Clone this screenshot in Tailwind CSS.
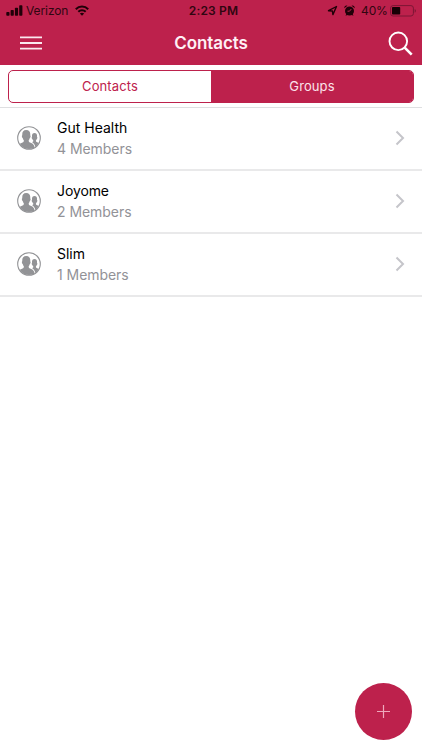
<!DOCTYPE html>
<html lang="en">
<head>
<meta charset="utf-8">
<title>Contacts</title>
<script src="https://cdn.jsdelivr.net/npm/@tailwindcss/browser@4"></script>
</head>
<body class="bg-white font-['Inter','Liberation_Sans',sans-serif]">
<svg class="absolute h-0 w-0">
  <clipPath id="disc"><circle cx="12" cy="12" r="11"/></clipPath>
  <symbol id="group" viewBox="0 0 24 24">
    <g clip-path="url(#disc)" fill="#929396">
      <path d="M15.2 16.2c1-.5 1.2-1 1.100-1.700-.5-.4-.8-.9-1-1.500-.7-.3-.8-1.700-.3-2-.2-2.400.6-3.900 2.500-3.900 2 0 2.800 1.500 2.500 3.900.6.300.4 1.700-.2 2-.2.700-.5 1.100-.9 1.500 0 1 .4 1.400 1.800 2l3 1V24h-5c-.2-4-.9-6.300-3.500-7.800z"/>
      <path d="M0 24v-4.500c1.500-1.500 4-2.100 5.500-2.900 1.300-.6 1.400-1.300 1.300-2.400-.6-.6-.9-1.400-1.100-2.300-.9-.4-1.100-2.400-.4-2.700C5 6 6.200 3.900 9.200 3.900c3.200 0 4.400 2.100 4 5.300.7.400.4 2.300-.4 2.700-.2.900-.5 1.700-1.100 2.300 0 1.200.2 1.800 1.400 2.400 2.800 1.200 4.600 2.100 4.900 7.400z"/>
    </g>
    <circle cx="12" cy="12" r="11.300" fill="none" stroke="#929396" stroke-width="1.100"/>
  </symbol>
  <symbol id="chevron" viewBox="0 0 10 16">
    <path d="M1.500 1.500 8 8l-6.500 6.500" fill="none" stroke="#c5c5ca" stroke-width="2"/>
  </symbol>
</svg>
<div class="relative flex h-[750px] w-[422px] flex-col overflow-hidden">
  <header class="h-[65px] shrink-0 bg-[#bd214c]">
    <div class="grid h-[21px] grid-cols-[1fr_auto_1fr] items-center pl-1.5 pr-[5px] text-[12px] leading-[21px] text-[#300611]">
      <div class="flex items-center">
        <svg class="h-[11px] w-[17px]" viewBox="0 0 17 11" fill="#200008"><rect x="0.300" y="7" width="3.200" height="3.700" rx=".8"/><rect x="4.600" y="5" width="3.200" height="5.700" rx=".8"/><rect x="8.900" y="2.800" width="3.200" height="7.900" rx=".8"/><rect x="13.200" y="0.300" width="3.200" height="10.400" rx=".8"/></svg>
        <span class="ml-[3px] w-[43px] whitespace-nowrap tracking-[-0.1px]">Verizon</span>
        <svg class="ml-[6px] h-[11px] w-[14px]" viewBox="0 0 14 11" fill="none" stroke="#200008" stroke-width="2"><path d="M.8 4.200C4.300.5 9.700.5 13.200 4.200M3.300 6.700c2.100-2.100 5.300-2.100 7.400 0"/><path d="M4.800 8.500c1.300-1.100 3.100-1.100 4.400 0L7 10.800z" fill="#200008" stroke="none"/></svg>
      </div>
      <span class="pl-[4px] font-semibold tracking-[0.15px]">2:23 PM</span>
      <div class="flex items-center justify-end">
        <svg class="h-[11px] w-[11px]" viewBox="0 0 11 11" fill="none" stroke="#200008" stroke-width="1.400" stroke-linejoin="round"><path d="M1.500 5.700 9.500 1.500 5.900 9.600 5.400 6z"/></svg>
        <svg class="ml-[6px] h-[11px] w-[11px]" viewBox="0 0 11 11"><g fill="#200008"><circle cx="5.500" cy="6" r="4.500"/><path d="M.3 3.200C0 1.500 1.700.1 3.400.7zM10.700 3.200C11 1.500 9.300.1 7.600.7zM1.500 10.800l1-2 1.500 1zM9.500 10.800l-1-2-1.500 1z"/></g><path d="M7.300 4 5.500 6.200H3.500" fill="none" stroke="#bd214c"/></svg>
        <span class="ml-[6px] w-[26px] whitespace-nowrap tracking-[-0.1px]">40%</span>
        <svg class="ml-[3px] h-[12px] w-[27px]" viewBox="0 0 27 12"><rect x=".6" y=".6" width="22.800" height="10.400" rx="2.500" fill="none" stroke="#7c1634"/><rect x="2" y="2" width="8.200" height="7.600" rx=".8" fill="#160005"/><path d="M24.700 4c1.600.5 1.600 3.200 0 3.700z" fill="#7c1634"/></svg>
      </div>
    </div>
    <div class="grid h-[44px] grid-cols-[1fr_auto_1fr] items-center pl-[9px] pr-[9px]">
      <svg class="ml-[11px] h-[14px] w-[22px]" viewBox="0 0 22 14" stroke="#fbe9ef" stroke-width="1.800"><path d="M0 1.400h22M0 7h22M0 12.600h22"/></svg>
      <h1 class="text-[17px] font-semibold leading-[44px] tracking-[-0.1px] text-[#fff0f5]">Contacts</h1>
      <svg class="h-[25px] w-[25px] justify-self-end" viewBox="0 0 25 25" fill="none" stroke="#fff"><circle cx="10.300" cy="10.300" r="8.800" stroke-width="1.900"/><path d="m16.700 16.700 7 7" stroke-width="2.600"/></svg>
    </div>
  </header>
  <div class="h-[43px] shrink-0 border-b border-[#dedfe1] px-2 pt-[5px]">
    <div class="grid h-[33px] w-[406px] grid-cols-2 overflow-hidden rounded-[5px] border border-[#bd214c] text-center text-[13px] leading-[31px] tracking-[0.1px]">
      <div class="text-[#bd214c]">Contacts</div>
      <div class="bg-[#bd214c] text-[#fbe3ea]">Groups</div>
    </div>
  </div>
  <ul class="text-[14px]">
    <li class="flex h-[63px] items-center border-b-2 border-[#e9e9ea] pb-px pl-[17px] pr-[17px]">
      <svg class="h-6 w-6"><use href="#group"/></svg>
      <div class="ml-4 grow pb-px"><p class="leading-[21px] text-black">Gut Health</p><p class="leading-[21px] tracking-[-0.05px] text-[#929297]">4 Members</p></div>
      <svg class="h-4 w-[10px]"><use href="#chevron"/></svg>
    </li>
    <li class="flex h-[63px] items-center border-b-2 border-[#e9e9ea] pb-px pl-[17px] pr-[17px]">
      <svg class="h-6 w-6"><use href="#group"/></svg>
      <div class="ml-4 grow pb-px"><p class="leading-[21px] tracking-[-0.1px] text-black">Joyome</p><p class="leading-[21px] tracking-[-0.05px] text-[#929297]">2 Members</p></div>
      <svg class="h-4 w-[10px]"><use href="#chevron"/></svg>
    </li>
    <li class="flex h-[63px] items-center border-b-2 border-[#e9e9ea] pb-px pl-[17px] pr-[17px]">
      <svg class="h-6 w-6"><use href="#group"/></svg>
      <div class="ml-4 grow pb-px"><p class="leading-[21px] text-black">Slim</p><p class="leading-[21px] tracking-[-0.05px] text-[#929297]">1 Members</p></div>
      <svg class="h-4 w-[10px]"><use href="#chevron"/></svg>
    </li>
  </ul>
  <button class="absolute bottom-[10.500px] right-[10.500px] flex h-[57px] w-[57px] items-center justify-center rounded-full bg-[#bd214c]" aria-label="Add group">
    <svg class="h-[13px] w-[13px]" viewBox="0 0 13 13" stroke="#eea9bc" stroke-width="1.200"><path d="M6.500 0v13M0 6.500h13"/></svg>
  </button>
</div>
</body>
</html>
